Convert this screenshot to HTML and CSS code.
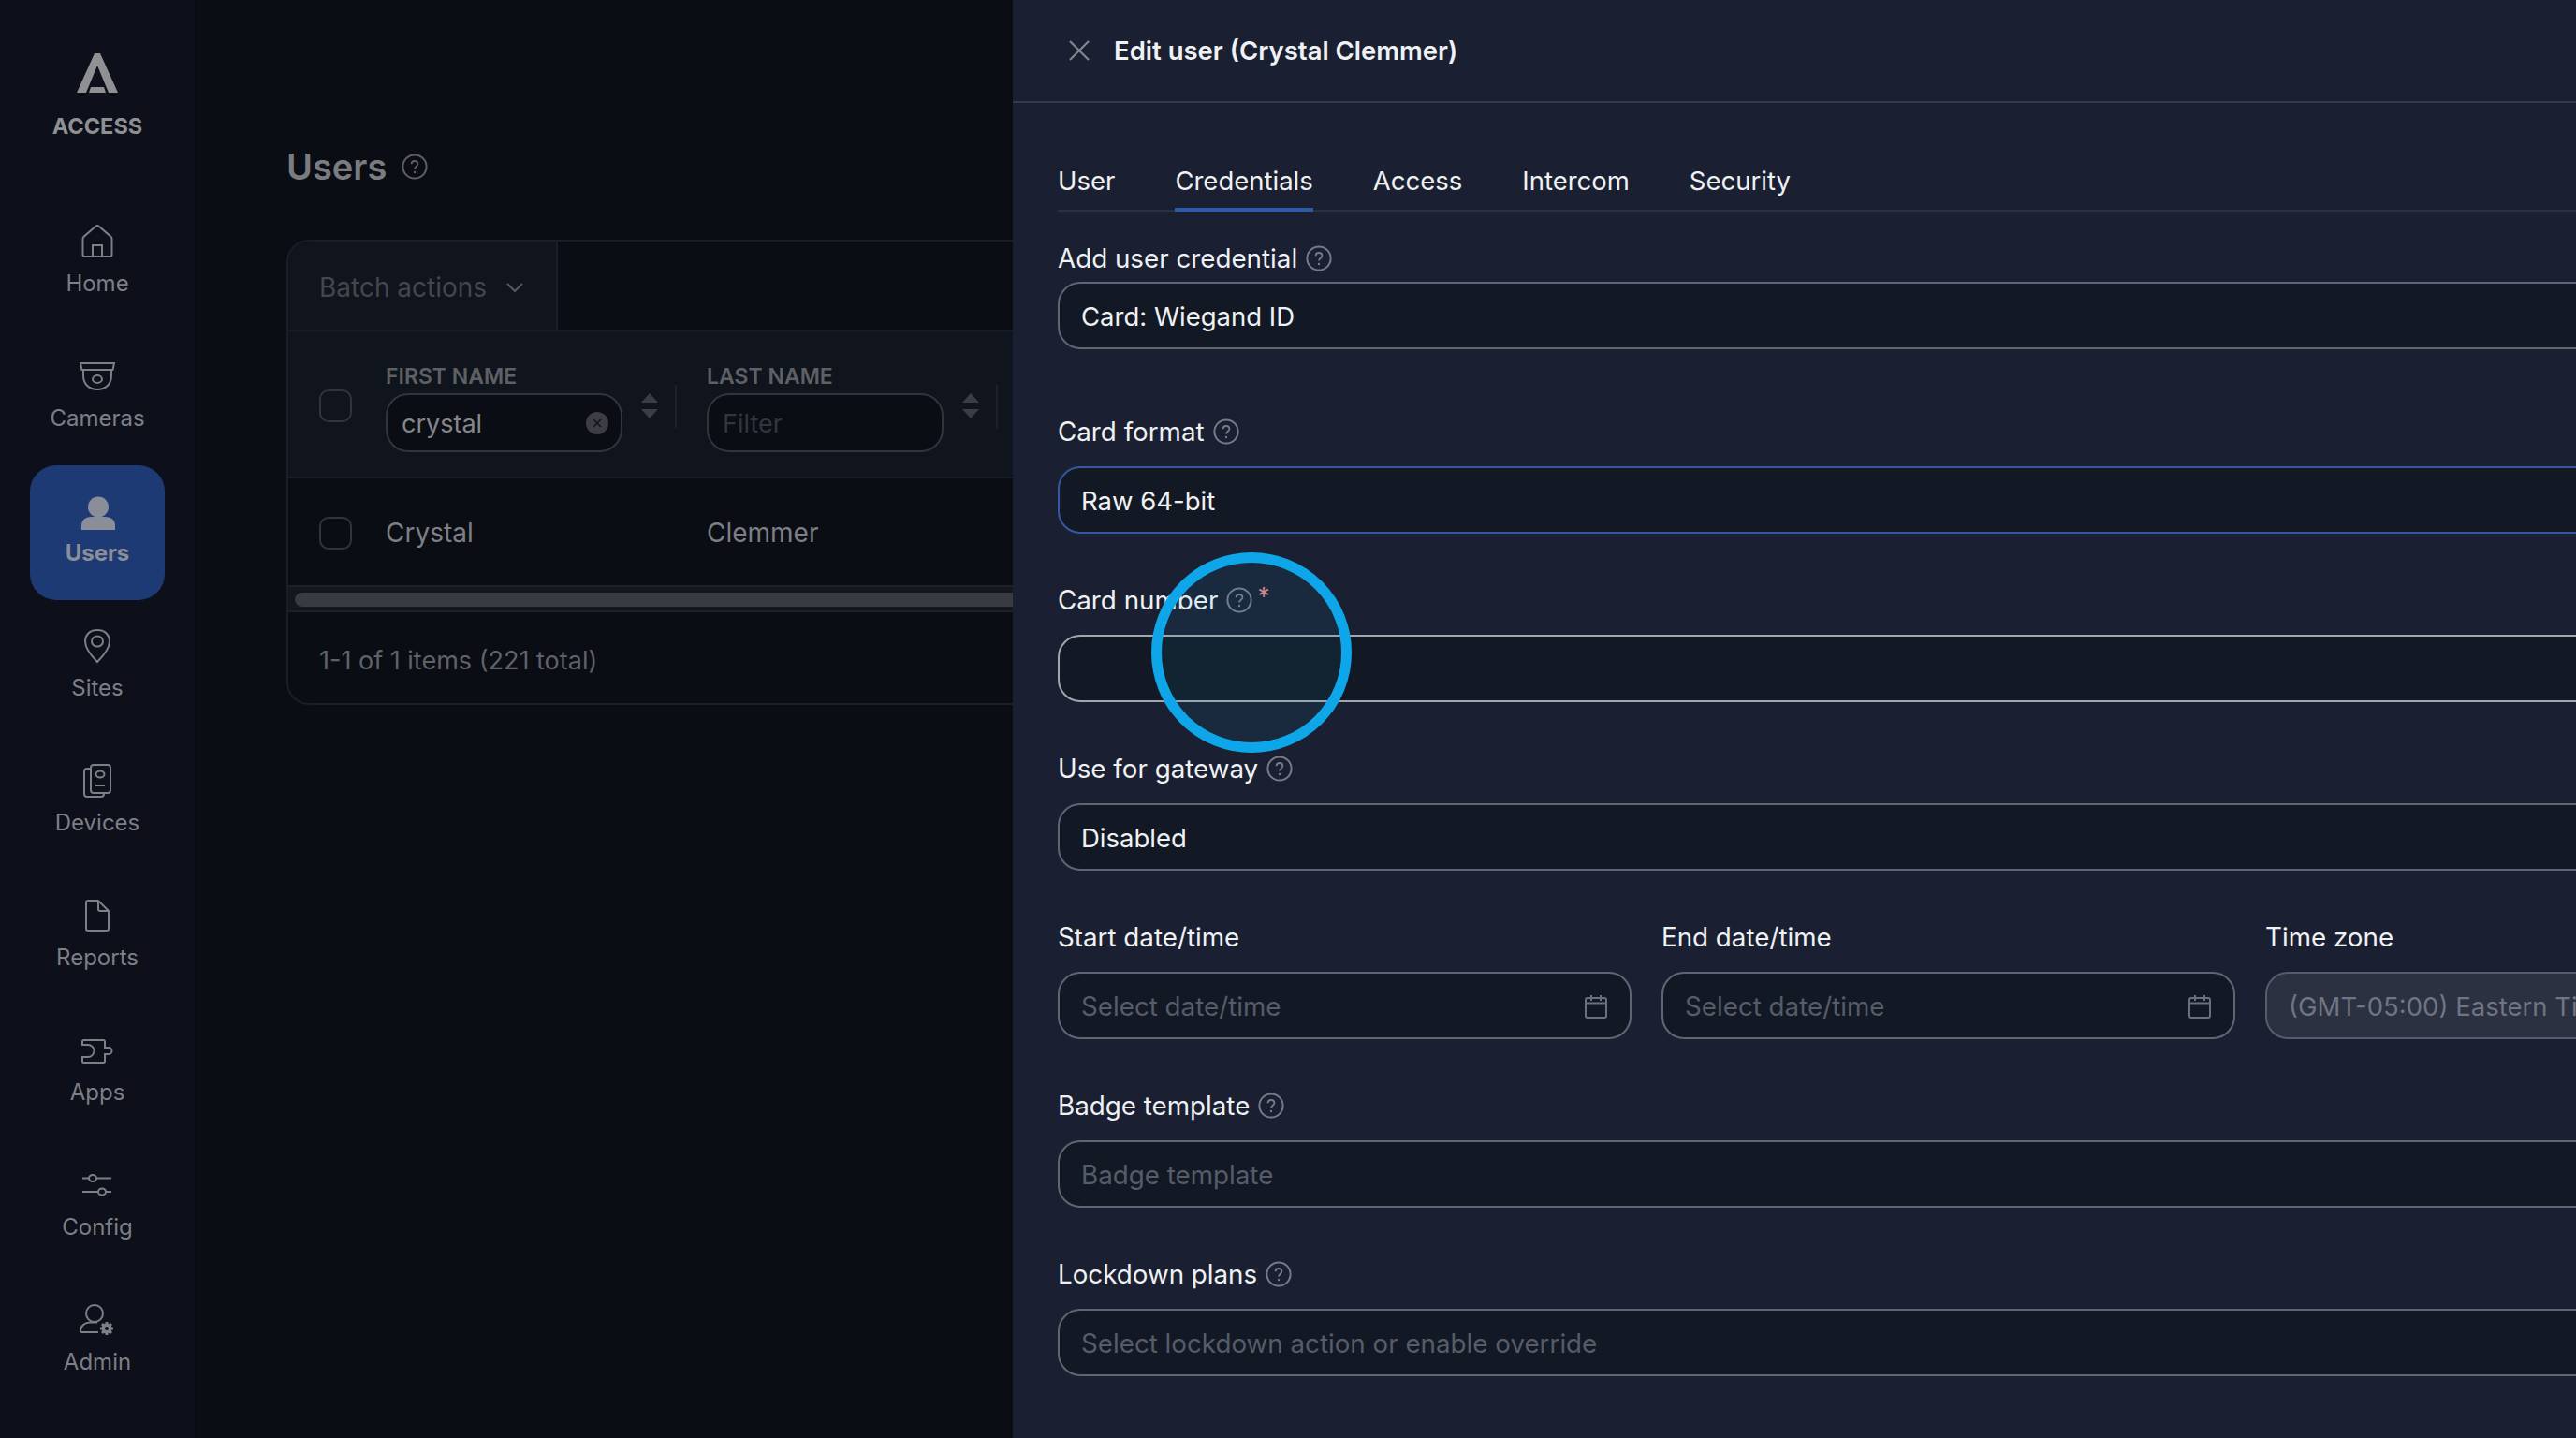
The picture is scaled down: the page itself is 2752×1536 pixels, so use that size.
FILE: index.html
```html
<!DOCTYPE html>
<html lang="en">
<head>
    <meta charset="UTF-8">
    <title>Edit user (Crystal Clemmer)</title>
    <link rel="stylesheet" href="styles.css">
</head>
<body>
    <svg class="sprite" width="0" height="0">
        <symbol id="help" viewBox="0 0 28 28">
            <circle cx="14" cy="14" r="12.600" fill="none" stroke="currentColor" stroke-width="2"/>
            <path d="M10.600 11.200c0-2 1.500-3.200 3.400-3.200s3.400 1.200 3.400 3c0 2.700-3.400 2.700-3.400 5.600" fill="none" stroke="currentColor" stroke-width="1.800"/>
            <circle cx="14" cy="20" r="1.200" fill="currentColor"/>
        </symbol>
        <symbol id="calendar" viewBox="0 0 26 26">
            <path d="M2 6a2 2 0 0 1 2-2h18a2 2 0 0 1 2 2v17a2 2 0 0 1-2 2H4a2 2 0 0 1-2-2zM2 9.500h22M8 1v6M18 1v6" fill="none" stroke="currentColor" stroke-width="2"/>
        </symbol>
    </svg>

    <!-- Left navigation -->
    <nav class="sidebar">
        <div class="logo">
            <svg width="44" height="42" viewBox="0 0 44 42"><path d="M19 0h6l19 42H34L22 13 10 42H0zM15 36h14l2 6H13z" fill="#8f9092"/></svg>
            <span>ACCESS</span>
        </div>
        <a class="nav-item">
            <svg class="nav-icon" viewBox="0 0 40 40"><path d="M4.500 17a3 3 0 0 1 1.200-2.400L18 4a3 3 0 0 1 4 0l12.300 10.600a3 3 0 0 1 1.200 2.400v17a2 2 0 0 1-2 2h-27a2 2 0 0 1-2-2zM15 36V24h10v12"/></svg>
            <span>Home</span>
        </a>
        <a class="nav-item">
            <svg class="nav-icon" viewBox="0 0 40 40"><path d="M2 6h36l-1.500 7h-33zM5 13v6c0 10 7 15 15 15s15-5 15-15v-6"/><ellipse cx="20" cy="23" rx="5" ry="4"/></svg>
            <span>Cameras</span>
        </a>
        <a class="nav-item active">
            <svg class="nav-icon" viewBox="0 0 40 40"><circle class="solid" cx="21" cy="15.500" r="11"/><path class="solid" d="M3 40v-5c0-6 5-9 11-9h14c6 0 11 3 11 9v5z"/></svg>
            <span>Users</span>
        </a>
        <a class="nav-item">
            <svg class="nav-icon" viewBox="0 0 40 40"><path d="M20 3c9 0 13 6 13 12 0 8-8 17-13 22-5-5-13-14-13-22C7 9 11 3 20 3z"/><ellipse cx="20" cy="15" rx="6" ry="5.500"/></svg>
            <span>Sites</span>
        </a>
        <a class="nav-item">
            <svg class="nav-icon" viewBox="0 0 40 40"><path d="M13 7H9a3 3 0 0 0-3 3v24a3 3 0 0 0 3 3h15a3 3 0 0 0 3-3v-1"/><rect x="13" y="3" width="21" height="30" rx="3"/><ellipse cx="23" cy="13" rx="4.500" ry="3.500"/><path d="M18 25h10"/></svg>
            <span>Devices</span>
        </a>
        <a class="nav-item">
            <svg class="nav-icon" viewBox="0 0 40 40"><path d="M10 4h11l11 11v19a2 2 0 0 1-2 2H10a2 2 0 0 1-2-2V6a2 2 0 0 1 2-2zM21 4v9a2 2 0 0 0 2 2h9"/></svg>
            <span>Reports</span>
        </a>
        <a class="nav-item">
            <svg class="nav-icon" viewBox="0 0 40 40"><path d="M5.500 9h21a1.500 1.500 0 0 1 1.500 1.500V17h4a3.500 3.500 0 0 1 0 7h-4v7.500a1.500 1.500 0 0 1-1.500 1.500h-21A1.500 1.500 0 0 1 4 31.500V27h6a6.500 6.500 0 0 0 0-13H4v-3.500A1.500 1.500 0 0 1 5.500 9z"/></svg>
            <span>Apps</span>
        </a>
        <a class="nav-item">
            <svg class="nav-icon" viewBox="0 0 40 40"><path d="M4 12.500h7M19 12.500h16M4 27h17M29 27h6"/><ellipse cx="15" cy="12.500" rx="4" ry="3.500"/><ellipse cx="25" cy="27" rx="4" ry="3.500"/></svg>
            <span>Config</span>
        </a>
        <a class="nav-item">
            <svg class="nav-icon" viewBox="0 0 40 40"><circle cx="17" cy="13" r="9"/><path d="M21 33H3.500a1.500 1.500 0 0 1-1.500-1.500C2 26 7 22.500 12 22.500h8"/><circle class="solid" cx="30" cy="29" r="5.500"/><path class="gear" d="M30 22v14M23 29h14M25 24l10 10M35 24 25 34"/><circle class="hole" cx="30" cy="29" r="2"/></svg>
            <span>Admin</span>
        </a>
    </nav>

    <!-- Users list, dimmed behind the drawer -->
    <main class="main">
        <h1 class="page-title">Users <svg class="help help-title"><use href="#help"/></svg></h1>
        <div class="table-card">
            <div class="table-top">
                <div class="batch">Batch actions
                    <svg width="20" height="12" viewBox="0 0 20 12"><path d="M2 2l8 8 8-8" fill="none" stroke="#56585e" stroke-width="2.200"/></svg>
                </div>
            </div>
            <div class="table-grid table-head">
                <span class="checkbox"></span>
                <div class="head-cell">
                    <div class="head-main">
                        <div class="head-label">FIRST NAME</div>
                        <div class="filter filter-value">crystal
                            <svg class="clear" viewBox="0 0 24 24"><circle cx="12" cy="12" r="12" fill="#3c3e44"/><path d="M8 8l8 8M16 8l-8 8" stroke="#111319" stroke-width="1.600"/></svg>
                        </div>
                    </div>
                    <div class="sort"><i class="up"></i><i class="down"></i></div>
                    <span class="head-divider"></span>
                </div>
                <div class="head-cell">
                    <div class="head-main">
                        <div class="head-label">LAST NAME</div>
                        <div class="filter">Filter</div>
                    </div>
                    <div class="sort"><i class="up"></i><i class="down"></i></div>
                    <span class="head-divider"></span>
                </div>
            </div>
            <div class="table-grid table-row">
                <span class="checkbox"></span>
                <span>Crystal</span>
                <span>Clemmer</span>
            </div>
            <div class="scroll-track"><div class="scroll-thumb"></div></div>
            <div class="table-foot">1-1 of 1 items (221 total)</div>
        </div>
    </main>

    <!-- Edit drawer -->
    <section class="panel">
        <header class="panel-header">
            <svg width="24" height="24" viewBox="0 0 24 24"><path d="M2 2l20 20M22 2 2 22" fill="none" stroke="#83868f" stroke-width="2.200"/></svg>
            <h2>Edit user (Crystal Clemmer)</h2>
        </header>

        <div class="tabs">
            <a class="tab">User</a>
            <a class="tab tab-active">Credentials</a>
            <a class="tab">Access</a>
            <a class="tab">Intercom</a>
            <a class="tab">Security</a>
        </div>

        <div class="form">
            <div class="field field-first">
                <div class="label">Add user credential <svg class="help"><use href="#help"/></svg></div>
                <div class="input">Card: Wiegand ID</div>
            </div>
            <div class="field">
                <div class="label">Card format <svg class="help"><use href="#help"/></svg></div>
                <div class="input input-focus">Raw 64-bit</div>
            </div>
            <div class="field">
                <div class="label">Card number <svg class="help"><use href="#help"/></svg><span class="required">*</span></div>
                <div class="input input-hover"></div>
            </div>
            <div class="field">
                <div class="label">Use for gateway <svg class="help"><use href="#help"/></svg></div>
                <div class="input">Disabled</div>
            </div>
            <div class="date-row">
                <div class="field">
                    <div class="label">Start date/time</div>
                    <div class="input placeholder">Select date/time <svg class="calendar"><use href="#calendar"/></svg></div>
                </div>
                <div class="field">
                    <div class="label">End date/time</div>
                    <div class="input placeholder">Select date/time <svg class="calendar"><use href="#calendar"/></svg></div>
                </div>
                <div class="field">
                    <div class="label">Time zone</div>
                    <div class="input input-disabled">(GMT-05:00) Eastern Time (US &amp; Canada)</div>
                </div>
            </div>
            <div class="field">
                <div class="label">Badge template <svg class="help"><use href="#help"/></svg></div>
                <div class="input placeholder">Badge template</div>
            </div>
            <div class="field">
                <div class="label">Lockdown plans <svg class="help"><use href="#help"/></svg></div>
                <div class="input placeholder">Select lockdown action or enable override</div>
            </div>
        </div>
    </section>

    <!-- Click highlight from the screen recording -->
    <div class="click-ring"></div>
</body>
</html>
```

FILE: styles.css
```css
/* General Reset */
* {
    margin: 0;
    padding: 0;
    box-sizing: border-box;
}

body {
    font-family: Inter, "Noto Sans", sans-serif;
    background-color: #0a0d14;
    display: flex;
    width: 2752px;
    height: 1536px;
    overflow: hidden;
    position: relative;
}

.sprite {
    position: absolute;
}

/* Sidebar */
.sidebar {
    width: 210px;
    flex: none;
    background-color: #0d101a;
    border-right: 2px solid #090b11;
    display: flex;
    flex-direction: column;
    align-items: center;
    padding-top: 57px;
}

.logo {
    height: 152px;
    display: flex;
    flex-direction: column;
    align-items: center;
    color: #8f9092;
    font-size: 23.500px;
    font-weight: 700;
    line-height: 30px;
}

.logo span {
    margin-top: 21px;
}

.nav-item {
    width: 144px;
    height: 144px;
    flex: none;
    padding-top: 29px;
    display: flex;
    flex-direction: column;
    align-items: center;
    gap: 13px;
    color: #7c7f86;
    font-size: 24px;
    line-height: 24px;
    border-radius: 28px;
}

.nav-icon {
    width: 40px;
    height: 40px;
    fill: none;
    stroke: #7c7f86;
    stroke-width: 2;
    overflow: visible;
}

.nav-icon .solid {
    fill: #7c7f86;
    stroke: none;
}

.nav-icon .gear {
    stroke-width: 3;
}

.nav-icon .hole {
    fill: #0d101a;
    stroke: none;
}

.nav-item.active {
    background-color: #1e3a75;
    color: #8a8e98;
    font-weight: 700;
}

.nav-item.active .nav-icon .solid {
    fill: #8a8e98;
}

/* Users list */
.main {
    width: 872px;
    flex: none;
    overflow: hidden;
    padding: 154px 0 0 96px;
}

.page-title {
    display: flex;
    align-items: center;
    gap: 16px;
    height: 48px;
    font-size: 38px;
    font-weight: 600;
    color: #7b7c80;
    margin-bottom: 54px;
}

.help {
    width: 28px;
    height: 28px;
    flex: none;
    color: #767b88;
}

.help-title {
    color: #5e6064;
}

.table-card {
    width: 1400px;
    height: 497px;
    border: 2px solid #1a1e28;
    border-radius: 24px;
    overflow: hidden;
}

.table-top {
    height: 96px;
    border-bottom: 2px solid #1a1e28;
}

.batch {
    width: 288px;
    height: 100%;
    padding: 4px 0 0 33px;
    display: flex;
    align-items: center;
    gap: 20px;
    background-color: #11141c;
    border-right: 2px solid #1a1e28;
    color: #43464d;
    font-size: 28px;
}

.table-grid {
    display: grid;
    grid-template-columns: 71px 343px 343px;
    align-items: center;
    padding-left: 33px;
}

.table-grid .checkbox {
    grid-column: 1;
}

.checkbox {
    width: 35px;
    height: 35px;
    border: 2px solid #30343c;
    border-radius: 10px;
}

.table-head {
    height: 157px;
    padding-top: 4px;
    background-color: #10141c;
    border-bottom: 2px solid #1a1e28;
}

.head-cell {
    display: flex;
    align-items: center;
}

.head-main {
    width: 253px;
    margin-top: 4px;
}

.head-label {
    font-size: 23px;
    font-weight: 600;
    line-height: 28px;
    color: #5e6065;
    margin-bottom: 4px;
}

.filter {
    height: 63px;
    padding: 2px 0 0 15px;
    display: flex;
    align-items: center;
    justify-content: space-between;
    background-color: #0a0d14;
    border: 2px solid #31343d;
    border-radius: 24px;
    color: #33363e;
    font-size: 27px;
}

.filter-value {
    color: #85878b;
}

.clear {
    width: 24px;
    height: 24px;
    margin: -2px 13px 0 0;
    flex: none;
}

.sort {
    width: 18px;
    margin-left: 20px;
    display: flex;
    flex-direction: column;
    gap: 7px;
}

.sort i {
    display: block;
    width: 0;
    height: 0;
    border-left: 9px solid transparent;
    border-right: 9px solid transparent;
}

.sort .up {
    border-bottom: 10px solid #3b3d44;
}

.sort .down {
    border-top: 10px solid #3b3d44;
}

.head-divider {
    width: 2px;
    height: 46px;
    margin-left: 18px;
    background-color: #1e2129;
}

.table-row {
    height: 114px;
    padding-top: 2px;
    color: #7d7f84;
    font-size: 28px;
}

.scroll-track {
    height: 29px;
    padding: 6px 0 6px 7px;
    background-color: #14171e;
    border-top: 2px solid #1c2029;
    border-bottom: 2px solid #1c2029;
}

.scroll-thumb {
    height: 15px;
    border-radius: 8px;
    background-color: #383b40;
}

.table-foot {
    height: 99px;
    padding: 4px 0 0 33px;
    display: flex;
    align-items: center;
    color: #5f6268;
    font-size: 27px;
}

/* Edit drawer */
.panel {
    flex: 1;
    min-width: 0;
    overflow: hidden;
    background-color: #1a2032;
    color: #f0f1f3;
}

.panel-header {
    height: 110px;
    padding-left: 59px;
    display: flex;
    align-items: center;
    gap: 25px;
    border-bottom: 2px solid #343a4b;
}

.panel-header h2 {
    font-size: 27.500px;
    font-weight: 600;
}

.tabs {
    height: 116px;
    margin-left: 48px;
    display: flex;
    align-items: flex-end;
    gap: 64px;
    border-bottom: 2px solid #2c3140;
}

.tab {
    height: 50px;
    margin-bottom: -2px;
    font-size: 27.500px;
    line-height: 34px;
    border-bottom: 4px solid transparent;
}

.tab-active {
    border-bottom-color: #2f5aa8;
}

.form {
    width: 1700px;
    margin-left: 48px;
    padding-top: 33px;
}

.field {
    margin-bottom: 54px;
}

.label {
    display: flex;
    align-items: center;
    gap: 9px;
    height: 34px;
    margin-bottom: 20px;
    font-size: 27.750px;
    white-space: nowrap;
}

.field-first {
    margin-bottom: 71px;
}

.field-first .label {
    margin-bottom: 8px;
}

.input {
    height: 72px;
    padding: 2px 23px 0;
    display: flex;
    align-items: center;
    justify-content: space-between;
    background-color: #131924;
    border: 2px solid #5f6673;
    border-radius: 24px;
    font-size: 27.500px;
    white-space: nowrap;
    overflow: hidden;
}

.input-focus {
    border-color: #3459a0;
}

.input-hover {
    border-color: #a3a6ad;
}

.placeholder {
    color: #565c69;
    font-size: 27.750px;
}

.input-disabled {
    background-color: #2b3140;
    border-color: #565c69;
    color: #6f7582;
}

.required {
    align-self: flex-start;
    margin-left: -4px;
    color: #d98a8a;
    font-size: 26px;
    line-height: 26px;
}

.calendar {
    width: 26px;
    height: 26px;
    flex: none;
    color: #6b7080;
}

.date-row {
    display: grid;
    grid-template-columns: 613px 613px 613px;
    gap: 32px;
}

/* Highlight ring sits on top of everything */
.click-ring {
    position: absolute;
    left: 1230px;
    top: 590px;
    width: 214px;
    height: 214px;
    border: 11px solid #0ea5e9;
    border-radius: 50%;
    background-color: rgba(14, 165, 233, 0.07);
}
```
